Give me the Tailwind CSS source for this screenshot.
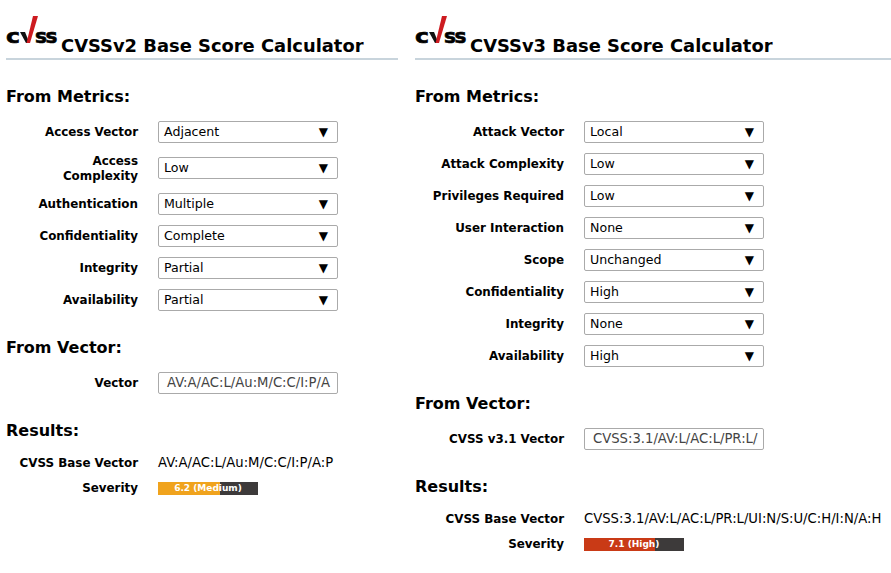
<!DOCTYPE html>
<html><head><meta charset="utf-8"><script src="https://cdn.jsdelivr.net/npm/@tailwindcss/browser@4"></script></head>
<body class="bg-white text-black font-['DejaVu_Sans',sans-serif] text-[12.600px] overflow-hidden">
<div class="flex w-[891px] h-[573px] pl-[6px] gap-[17px]">

<section class="w-[392px]">
  <div class="h-[60px] border-b-2 border-[#c8d4dc] flex items-end relative">
    <div class="absolute left-0 top-[15px] w-[52px] h-[32px] text-[20px] leading-[20px] font-bold [-webkit-text-stroke:0.6px_black]">
      <span class="absolute left-0 top-[11px] origin-left scale-x-[1.18]">c</span>
      <span class="absolute left-[29px] top-[11px] tracking-[-1.500px]">ss</span>
      <svg class="absolute left-[14px] top-[1px]" width="20" height="28" viewBox="0 0 20 28"><path d="M0 16 L5 16 L9.500 27 L6 27 Z" fill="#111"/><path d="M13 0 L18 0 L10 27 L6.500 27 Z" fill="#cd1b20"/></svg>
    </div>
    <h2 class="ml-[55px] text-[17.900px] leading-[24px] font-bold whitespace-nowrap">CVSSv2 Base Score Calculator</h2>
  </div>
  <h3 class="mt-[26px] text-[16px] leading-[22px] font-bold">From Metrics:</h3>
  <div class="mt-[13px] flex flex-col gap-[10px]">
    <div class="flex items-center"><label class="w-[132px] pt-px text-right font-bold text-[11.900px]">Access Vector</label><div class="ml-[20px] w-[180px] h-[22px] border border-[#aaa] rounded-[2px] flex items-center justify-between pl-[5px] pr-[9px]"><span>Adjacent</span><span class="text-[12px]">▼</span></div></div>
    <div class="flex items-center h-[30px]"><label class="w-[132px] pt-px text-right font-bold text-[11.900px] leading-[15px]">Access<br>Complexity</label><div class="ml-[20px] w-[180px] h-[22px] border border-[#aaa] rounded-[2px] flex items-center justify-between pl-[5px] pr-[9px]"><span>Low</span><span class="text-[12px]">▼</span></div></div>
    <div class="flex items-center"><label class="w-[132px] pt-px text-right font-bold text-[11.900px]">Authentication</label><div class="ml-[20px] w-[180px] h-[22px] border border-[#aaa] rounded-[2px] flex items-center justify-between pl-[5px] pr-[9px]"><span>Multiple</span><span class="text-[12px]">▼</span></div></div>
    <div class="flex items-center"><label class="w-[132px] pt-px text-right font-bold text-[11.900px]">Confidentiality</label><div class="ml-[20px] w-[180px] h-[22px] border border-[#aaa] rounded-[2px] flex items-center justify-between pl-[5px] pr-[9px]"><span>Complete</span><span class="text-[12px]">▼</span></div></div>
    <div class="flex items-center"><label class="w-[132px] pt-px text-right font-bold text-[11.900px]">Integrity</label><div class="ml-[20px] w-[180px] h-[22px] border border-[#aaa] rounded-[2px] flex items-center justify-between pl-[5px] pr-[9px]"><span>Partial</span><span class="text-[12px]">▼</span></div></div>
    <div class="flex items-center"><label class="w-[132px] pt-px text-right font-bold text-[11.900px]">Availability</label><div class="ml-[20px] w-[180px] h-[22px] border border-[#aaa] rounded-[2px] flex items-center justify-between pl-[5px] pr-[9px]"><span>Partial</span><span class="text-[12px]">▼</span></div></div>
  </div>
  <h3 class="mt-[26px] text-[16px] leading-[22px] font-bold">From Vector:</h3>
  <div class="mt-[13px] flex items-center"><label class="w-[132px] pt-px text-right font-bold text-[11.900px]">Vector</label><div class="ml-[20px] w-[180px] h-[22px] border border-[#aaa] rounded-[2px] flex items-center pl-[8px] overflow-hidden whitespace-nowrap text-[#444] text-[13.200px]">AV:A/AC:L/Au:M/C:C/I:P/A</div></div>
  <h3 class="mt-[26px] text-[16px] leading-[22px] font-bold">Results:</h3>
  <div class="mt-[12px] flex items-center h-[18px]"><label class="w-[132px] pt-px text-right font-bold text-[11.900px]">CVSS Base Vector</label><span class="ml-[20px] whitespace-nowrap text-[13.200px]">AV:A/AC:L/Au:M/C:C/I:P/A:P</span></div>
  <div class="mt-[7px] flex items-center h-[18px]"><label class="w-[132px] pt-px text-right font-bold text-[11.900px]">Severity</label>
    <div class="ml-[20px] w-[100px] h-[13px] bg-[#3d3a3a] relative"><div class="h-full w-[62px] bg-[#f0a31d]"></div><span class="absolute inset-0 text-center text-white font-bold text-[9px] leading-[13px]">6.2 (Medium)</span></div>
  </div>
</section>

<section class="w-[476px]">
  <div class="h-[60px] border-b-2 border-[#c8d4dc] flex items-end relative">
    <div class="absolute left-0 top-[15px] w-[52px] h-[32px] text-[20px] leading-[20px] font-bold [-webkit-text-stroke:0.6px_black]">
      <span class="absolute left-0 top-[11px] origin-left scale-x-[1.18]">c</span>
      <span class="absolute left-[29px] top-[11px] tracking-[-1.500px]">ss</span>
      <svg class="absolute left-[14px] top-[1px]" width="20" height="28" viewBox="0 0 20 28"><path d="M0 16 L5 16 L9.500 27 L6 27 Z" fill="#111"/><path d="M13 0 L18 0 L10 27 L6.500 27 Z" fill="#cd1b20"/></svg>
    </div>
    <h2 class="ml-[55px] text-[17.900px] leading-[24px] font-bold whitespace-nowrap">CVSSv3 Base Score Calculator</h2>
  </div>
  <h3 class="mt-[26px] text-[16px] leading-[22px] font-bold">From Metrics:</h3>
  <div class="mt-[13px] flex flex-col gap-[10px]">
    <div class="flex items-center"><label class="w-[149px] pt-px text-right font-bold text-[11.900px]">Attack Vector</label><div class="ml-[20px] w-[180px] h-[22px] border border-[#aaa] rounded-[2px] flex items-center justify-between pl-[5px] pr-[9px]"><span>Local</span><span class="text-[12px]">▼</span></div></div>
    <div class="flex items-center"><label class="w-[149px] pt-px text-right font-bold text-[11.900px]">Attack Complexity</label><div class="ml-[20px] w-[180px] h-[22px] border border-[#aaa] rounded-[2px] flex items-center justify-between pl-[5px] pr-[9px]"><span>Low</span><span class="text-[12px]">▼</span></div></div>
    <div class="flex items-center"><label class="w-[149px] pt-px text-right font-bold text-[11.900px]">Privileges Required</label><div class="ml-[20px] w-[180px] h-[22px] border border-[#aaa] rounded-[2px] flex items-center justify-between pl-[5px] pr-[9px]"><span>Low</span><span class="text-[12px]">▼</span></div></div>
    <div class="flex items-center"><label class="w-[149px] pt-px text-right font-bold text-[11.900px]">User Interaction</label><div class="ml-[20px] w-[180px] h-[22px] border border-[#aaa] rounded-[2px] flex items-center justify-between pl-[5px] pr-[9px]"><span>None</span><span class="text-[12px]">▼</span></div></div>
    <div class="flex items-center"><label class="w-[149px] pt-px text-right font-bold text-[11.900px]">Scope</label><div class="ml-[20px] w-[180px] h-[22px] border border-[#aaa] rounded-[2px] flex items-center justify-between pl-[5px] pr-[9px]"><span>Unchanged</span><span class="text-[12px]">▼</span></div></div>
    <div class="flex items-center"><label class="w-[149px] pt-px text-right font-bold text-[11.900px]">Confidentiality</label><div class="ml-[20px] w-[180px] h-[22px] border border-[#aaa] rounded-[2px] flex items-center justify-between pl-[5px] pr-[9px]"><span>High</span><span class="text-[12px]">▼</span></div></div>
    <div class="flex items-center"><label class="w-[149px] pt-px text-right font-bold text-[11.900px]">Integrity</label><div class="ml-[20px] w-[180px] h-[22px] border border-[#aaa] rounded-[2px] flex items-center justify-between pl-[5px] pr-[9px]"><span>None</span><span class="text-[12px]">▼</span></div></div>
    <div class="flex items-center"><label class="w-[149px] pt-px text-right font-bold text-[11.900px]">Availability</label><div class="ml-[20px] w-[180px] h-[22px] border border-[#aaa] rounded-[2px] flex items-center justify-between pl-[5px] pr-[9px]"><span>High</span><span class="text-[12px]">▼</span></div></div>
  </div>
  <h3 class="mt-[26px] text-[16px] leading-[22px] font-bold">From Vector:</h3>
  <div class="mt-[13px] flex items-center"><label class="w-[149px] pt-px text-right font-bold text-[11.900px]">CVSS v3.1 Vector</label><div class="ml-[20px] w-[180px] h-[22px] border border-[#aaa] rounded-[2px] flex items-center pl-[8px] overflow-hidden whitespace-nowrap text-[#444] text-[13.200px]">CVSS:3.1/AV:L/AC:L/PR:L/</div></div>
  <h3 class="mt-[26px] text-[16px] leading-[22px] font-bold">Results:</h3>
  <div class="mt-[12px] flex items-center h-[18px]"><label class="w-[149px] pt-px text-right font-bold text-[11.900px]">CVSS Base Vector</label><span class="ml-[20px] whitespace-nowrap text-[13.200px]">CVSS:3.1/AV:L/AC:L/PR:L/UI:N/S:U/C:H/I:N/A:H</span></div>
  <div class="mt-[7px] flex items-center h-[18px]"><label class="w-[149px] pt-px text-right font-bold text-[11.900px]">Severity</label>
    <div class="ml-[20px] w-[100px] h-[13px] bg-[#3d3a3a] relative"><div class="h-full w-[71px] bg-[#c93a16]"></div><span class="absolute inset-0 text-center text-white font-bold text-[9px] leading-[13px]">7.1 (High)</span></div>
  </div>
</section>
</div>
</body></html>
